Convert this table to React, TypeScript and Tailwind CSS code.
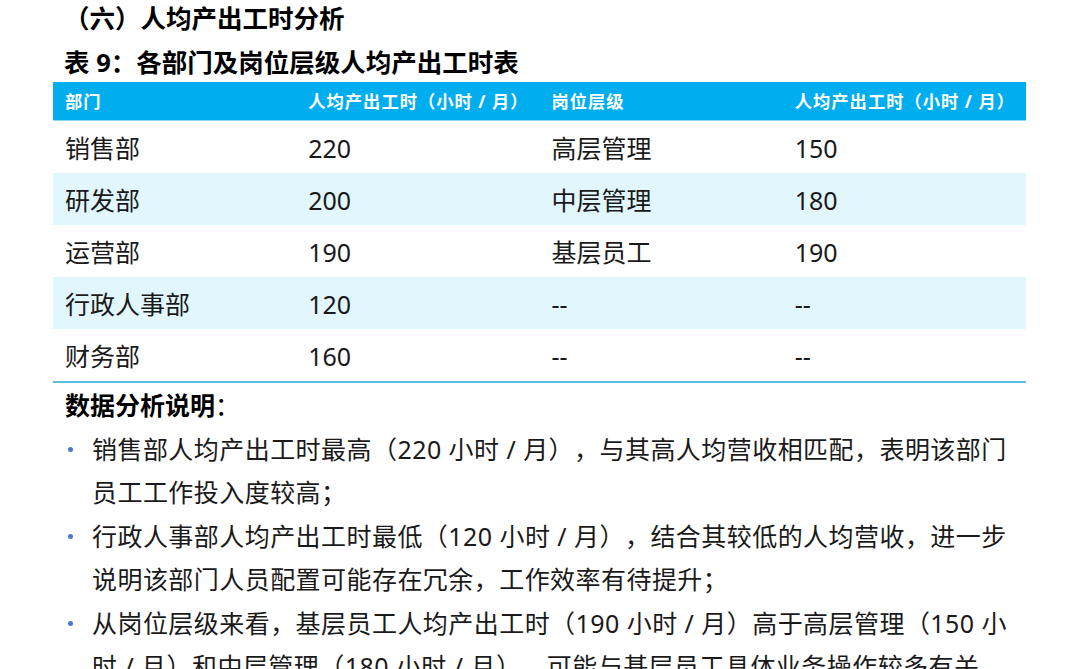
const depts = [
  { name: "销售部", hours: "220", level: "高层管理", levelHours: "150" },
  { name: "研发部", hours: "200", level: "中层管理", levelHours: "180" },
  { name: "运营部", hours: "190", level: "基层员工", levelHours: "190" },
  { name: "行政人事部", hours: "120", level: "--", levelHours: "--" },
  { name: "财务部", hours: "160", level: "--", levelHours: "--" },
];

const notes: string[][] = [
  [
    "销售部人均产出工时最高（220 小时 / 月），与其高人均营收相匹配，表明该部门",
    "员工工作投入度较高；",
  ],
  [
    "行政人事部人均产出工时最低（120 小时 / 月），结合其较低的人均营收，进一步",
    "说明该部门人员配置可能存在冗余，工作效率有待提升；",
  ],
  [
    "从岗位层级来看，基层员工人均产出工时（190 小时 / 月）高于高层管理（150 小",
    "时 / 月）和中层管理（180 小时 / 月），可能与基层员工具体业务操作较多有关。",
  ],
];

const cols = "grid grid-cols-4";

export default function App() {
  return (
    <div className="w-[1080px] bg-white pl-[53px] pr-[54px] text-[#1a1a1a] [text-spacing-trim:space-all] font-['Noto_Sans','Noto_Sans_CJK_SC',sans-serif]">
      {/* title */}
      <h2 className="pl-[11px] text-[25.5px] leading-[36px] font-bold text-black">
        （六）人均产出工时分析
      </h2>
      <h3 className="mt-[8px] mb-[2px] pl-[11px] text-[25.5px] leading-[36px] font-bold text-black">
        表 9：各部门及岗位层级人均产出工时表
      </h3>

      {/* table */}
      <div className="border-b-2 border-[#5bbfdc]">
        <div className={`${cols} h-[39px] items-center bg-[#00aeef] border-b border-[#8ad8f4] text-[17.3px] tracking-[1px] font-bold text-white`}>
          <div className="pl-[12px] pt-[2px]">部门</div>
          <div className="pl-[12px] pt-[2px]">人均产出工时（小时 / 月）</div>
          <div className="pl-[12px] pt-[2px]">岗位层级</div>
          <div className="pl-[12px] pt-[2px]">人均产出工时（小时 / 月）</div>
        </div>
        {depts.map((d, i) => (
          <div
            key={d.name}
            className={`${cols} h-[52px] items-center text-[25px] ${i % 2 === 1 ? "bg-[#e1f6fd]" : "bg-white"}`}
          >
            <div className="pl-[12px] pt-[4px]">{d.name}</div>
            <div className="pl-[12px] pt-[4px]">{d.hours}</div>
            <div className="pl-[12px] pt-[4px]">{d.level}</div>
            <div className="pl-[12px] pt-[4px]">{d.levelHours}</div>
          </div>
        ))}
      </div>

      {/* notes */}
      <div className="pl-[12px] pt-[1px] text-[25px] leading-[43.5px]">
        <p className="text-black">
          <span className="font-bold">数据分析说明</span>：
        </p>
        <ul className="tracking-[0.45px]">
          {notes.map((lines, i) => (
            <li key={i} className="flex">
              <span className="w-[27px] shrink-0 flex h-[43.5px] items-center">
                <span className="ml-[3px] h-[5px] w-[5px] rounded-full bg-[#4a78d0]" />
              </span>
              <span className="whitespace-nowrap">
                {lines[0]}
                <br />
                {lines[1]}
              </span>
            </li>
          ))}
        </ul>
      </div>
    </div>
  );
}
